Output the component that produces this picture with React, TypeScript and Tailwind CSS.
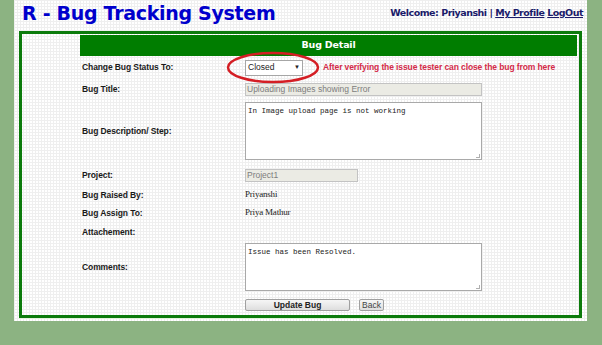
import React from 'react';

const labelCls = "w-[165px] shrink-0 pl-[2px] font-bold text-[8.5px] tracking-[-0.1px] text-[#1a1a1a] whitespace-nowrap";
const labelFont = { fontFamily: '"Liberation Sans", Arial, sans-serif' };
const serifFont = { fontFamily: '"Liberation Serif", "Times New Roman", serif' };

const Row: React.FC<{ label?: string; h: string; children?: React.ReactNode }> = ({ label, h, children }) => (
  <div className={`flex items-center ${h}`}>
    <div className={labelCls} style={labelFont}>{label}</div>
    <div className="flex items-center">{children}</div>
  </div>
);

export default function App() {
  return (
    <div className="w-[602px] h-[345px] bg-[#8cb382] flex overflow-hidden" style={{ fontFamily: '"DejaVu Sans", Verdana, sans-serif' }}>
      <div className="w-[14px] shrink-0" />
      <div className="w-[573px] h-[321px] bg-white bg-[linear-gradient(#efefef_1px,transparent_1px),linear-gradient(90deg,#efefef_1px,transparent_1px)] bg-[size:3px_3px] flex flex-col">
        {/* header */}
        <div className="h-[31px] flex items-start justify-between pl-[8px] pr-[4px]">
          <h1 className="text-[19px] leading-[26px] font-bold text-[#0000cc] tracking-[-0.3px]">R - Bug Tracking System</h1>
          <div className="text-[9.5px] leading-[26px] font-bold text-[#1b1b6a] tracking-[-0.5px]">
            Welcome: Priyanshi | <a className="underline">My Profile</a> <a className="underline">LogOut</a>
          </div>
        </div>

        {/* box */}
        <div className="ml-[5px] w-[563px] h-[287px] border-[3px] border-[#0c7b0c] pt-[1px] relative">
          <div className="ml-[58px] w-[497px]">
            <div className="h-[21px] bg-[#007d00] text-white font-bold text-[9.5px] tracking-[-0.2px] flex items-center justify-center">Bug Detail</div>

            <Row label="Change Bug Status To:" h="h-[23px]">
              <div className="w-[58px] h-[16px] bg-white border border-[#a6a6a6] flex items-center justify-between px-[2px] text-[8.5px] text-[#222]" style={labelFont}>
                <span>Closed</span>
                <span className="text-[6px]">▼</span>
              </div>
              <span className="ml-[20px] text-[8.5px] font-bold tracking-[-0.1px] text-[#d42a48] whitespace-nowrap" style={labelFont}>After verifying the issue tester can close the bug from here</span>
            </Row>

            <Row label="Bug Title:" h="h-[20px]">
              <div className="w-[237px] h-[13px] bg-[#ebebe4] border border-[#c3c3c3] flex items-center px-[1px] text-[8.5px] text-[#7d7d7d]" style={labelFont}>
                Uploading Images showing Error
              </div>
            </Row>

            <Row label="Bug Description/ Step:" h="h-[64px]">
              <div className="relative w-[237px] h-[58px] bg-white border border-[#a9a9a9] px-[2px] pt-[3px] text-[7.5px] text-[#222]" style={{ fontFamily: '"Liberation Mono", "Courier New", monospace' }}>
                In Image upload page is not working
                <span className="absolute right-[1px] bottom-[1px] w-[4px] h-[4px] border-r border-b border-[#b0b0b0]" />
              </div>
            </Row>

            <Row label="Project:" h="h-[24px]">
              <div className="w-[113px] h-[13px] bg-[#ebebe4] border border-[#c3c3c3] flex items-center px-[1px] text-[8.5px] text-[#7d7d7d]" style={labelFont}>
                Project1
              </div>
            </Row>

            <Row label="Bug Raised By:" h="h-[16px]">
              <span className="text-[9px] tracking-[-0.2px] text-[#222]" style={serifFont}>Priyanshi</span>
            </Row>

            <Row label="Bug Assign To:" h="h-[20px]">
              <span className="text-[9px] tracking-[-0.2px] text-[#222]" style={serifFont}>Priya Mathur</span>
            </Row>

            <Row label="Attachement:" h="h-[18px]" />

            <Row label="Comments:" h="h-[52px]">
              <div className="relative w-[237px] h-[48px] bg-white border border-[#a9a9a9] px-[2px] pt-[3px] text-[7.5px] text-[#222]" style={{ fontFamily: '"Liberation Mono", "Courier New", monospace' }}>
                Issue has been Resolved.
                <span className="absolute right-[1px] bottom-[1px] w-[4px] h-[4px] border-r border-b border-[#b0b0b0]" />
              </div>
            </Row>

            <div className="flex pl-[165px] pt-[6px] gap-[9px]">
              <button className="w-[105px] h-[12px] border border-[#a0a0a0] rounded-[2px] bg-[linear-gradient(#f6f6f6,#dedede)] text-[8.5px] font-bold text-[#222] leading-none" style={labelFont}>Update Bug</button>
              <button className="w-[25px] h-[12px] border border-[#a0a0a0] rounded-[2px] bg-[linear-gradient(#f6f6f6,#dedede)] text-[8.5px] text-[#444] leading-none" style={labelFont}>Back</button>
            </div>
          </div>

          {/* red annotation ellipse */}
          <svg className="absolute left-[204px] top-[17px]" width="94" height="33" viewBox="0 0 94 33">
            <ellipse cx="47" cy="16.5" rx="45" ry="14.5" fill="none" stroke="#d41e24" strokeWidth="2.5" />
          </svg>
        </div>
        <div className="h-[1px] ml-[5px] w-[564px] bg-[#e4f3dc]" />
      </div>
    </div>
  );
}
